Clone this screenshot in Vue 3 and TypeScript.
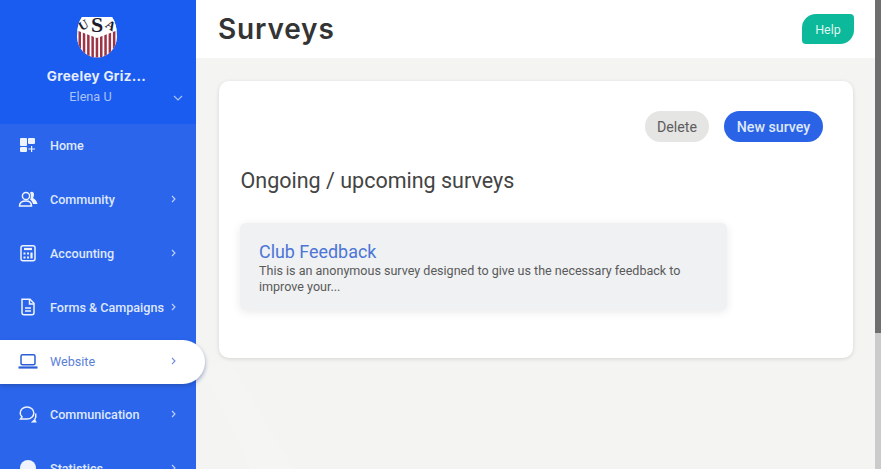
<script setup lang="ts">
interface NavItem { label: string; icon: string; arrow: boolean; active?: boolean }
const items: NavItem[] = [
  { label: 'Home', icon: 'home', arrow: false },
  { label: 'Community', icon: 'community', arrow: true },
  { label: 'Accounting', icon: 'accounting', arrow: true },
  { label: 'Forms & Campaigns', icon: 'forms', arrow: true },
  { label: 'Website', icon: 'website', arrow: true, active: true },
  { label: 'Communication', icon: 'communication', arrow: true },
  { label: 'Statistics', icon: 'statistics', arrow: true },
]
const stripes = [0, 1, 2, 3, 4, 5, 6, 7, 8]
</script>

<template>
  <div class="page">
    <aside class="sidebar">
      <div class="brand">
        <svg class="logo" width="42" height="44" viewBox="0 0 42 44">
          <defs>
            <clipPath id="logoClip"><path d="M6 3 H36 Q41 10 41 23 A20 20.500 0 0 1 1 23 Q1 10 6 3Z" /></clipPath>
          </defs>
          <g clip-path="url(#logoClip)">
            <rect width="42" height="44" fill="#fff" />
            <rect v-for="s in stripes" :key="s" :x="2.500 + s * 4.300" y="8" width="2.500" height="36" fill="#9c3346" />
            <path d="M0 0H42V16L21 24L0 16Z" fill="#fff" />
            <text x="21" y="18" text-anchor="middle" class="logo-s">S</text>
            <text x="9.500" y="15" text-anchor="middle" class="logo-a" transform="rotate(-30 9.500 15)">U</text>
            <text x="32.500" y="15" text-anchor="middle" class="logo-a" transform="rotate(30 32.500 15)">A</text>
          </g>
        </svg>
        <div class="club">Greeley Griz...</div>
        <div class="user">
          <span>Elena U</span>
          <svg class="chev" width="10" height="6" viewBox="0 0 10 6"><path d="M1 1l4 4 4-4" fill="none" stroke="currentColor" stroke-width="1.2" /></svg>
        </div>
      </div>
      <nav class="nav">
        <a v-for="item in items" :key="item.label" class="item" :class="{ active: item.active }">
          <span class="icon">
            <svg width="22" height="20" viewBox="0 0 22 20" fill="none" stroke="currentColor" stroke-width="1.5">
              <g v-if="item.icon === 'home'" fill="currentColor" stroke="none">
                <rect x="3" y="3" width="7" height="8" rx="1" />
                <rect x="11" y="3" width="7" height="6" rx="1" />
                <rect x="3" y="12" width="7" height="5" rx="1" />
                <path d="M14 11h1.200v2.400H18v1.200h-2.800V17H14v-2.400h-2.600v-1.200H14z" />
              </g>
              <g v-else-if="item.icon === 'community'">
                <circle cx="9" cy="7" r="3.600" />
                <path d="M2.500 17c0-3.500 2.500-5 6.500-5s5.500 2 5.500 5z" />
                <path d="M13 3.500c2-1.500 4-.5 4 2 0 1.500-.5 2.500-1 3.500 2 1 4 3 4.500 6h-4.500c-.5-2-1.500-3.500-3-4.500 1-1.500 1.500-4 0-7z" fill="currentColor" stroke="none" />
              </g>
              <g v-else-if="item.icon === 'accounting'">
                <rect x="4" y="2.750" width="14" height="15" rx="2" />
                <path d="M7 6h8" stroke-width="2.200" />
                <path d="M6.500 10.500h2M10 10.500h2M13.500 10.500h2M6.500 14.500h2M10 14.500h2M14.500 10v5.500" stroke-width="2.200" />
              </g>
              <g v-else-if="item.icon === 'forms'">
                <path d="M5 2.750h8l4 4v9.500a2 2 0 0 1-2 2H7a2 2 0 0 1-2-2z" transform="translate(0 -.5)" />
                <path d="M12.500 2.500v4.500h4.500" />
                <path d="M8 11h6M8 14h6" />
              </g>
              <g v-else-if="item.icon === 'website'">
                <rect x="4" y="3.750" width="14" height="10" rx="1.500" />
                <path d="M1.500 16.500h19" stroke-width="2.200" />
              </g>
              <g v-else-if="item.icon === 'communication'">
                <path d="M10 3c4 0 6.800 2.600 6.800 6s-2.800 6-6.800 6H3.500l1.500-2.200C3.800 11.800 3.200 10.500 3.200 9c0-3.400 2.800-6 6.800-6z" />
                <path d="M18.600 9.500c.6 2.500 0 4.500-.8 6" />
                <path d="M19.800 18.500h-6l4-3.800z" fill="currentColor" stroke="none" />
              </g>
              <g v-else>
                <circle cx="11" cy="10" r="8" fill="currentColor" stroke="none" />
              </g>
            </svg>
          </span>
          <span class="label">{{ item.label }}</span>
          <svg v-if="item.arrow" class="arrow" width="5" height="8" viewBox="0 0 5 8"><path d="M1 1l3 3-3 3" fill="none" stroke="currentColor" stroke-width="1.100" /></svg>
        </a>
      </nav>
    </aside>

    <main class="main">
      <header class="topbar">
        <h1>Surveys</h1>
        <button class="help">Help</button>
      </header>
      <div class="content">
        <svg class="band" width="110" height="111" viewBox="0 0 110 111"><polygon points="8,12 32,0 97,111 55,111" fill="#f5f5f4" /></svg>
        <section class="card">
          <div class="actions">
            <button class="btn gray">Delete</button>
            <button class="btn blue">New survey</button>
          </div>
          <h2>Ongoing / upcoming surveys</h2>
          <article class="survey">
            <h3>Club Feedback</h3>
            <p>This is an anonymous survey designed to give us the necessary feedback to improve your...</p>
          </article>
        </section>
      </div>
    </main>

    <div class="scrollbar"><div class="thumb"></div></div>
  </div>
</template>

<style scoped>
.page {
  display: flex;
  width: 881px;
  height: 469px;
  overflow: hidden;
  font-family: Roboto, "Liberation Sans", sans-serif;
  background: #f4f4f3;
}
.sidebar {
  position: relative;
  z-index: 2;
  flex: none;
  width: 196px;
  background: #2b65ec;
  color: #fff;
}
.brand {
  display: flex;
  flex-direction: column;
  align-items: center;
  height: 124px;
  padding-top: 14px;
  box-sizing: border-box;
  background: #1a5cf0;
}
.logo { display: block; margin: 0 2px 9px 0; }
.logo-s {
  font-family: "Liberation Serif", serif;
  font-weight: 700;
  font-size: 22px;
  fill: #1c1c2c;
}
.logo-a {
  font-family: "Liberation Serif", serif;
  font-weight: 700;
  font-size: 13px;
  fill: #1c1c2c;
}
.club {
  margin-right: 3px;
  font-family: Inter, "Open Sans", sans-serif;
  font-weight: 700;
  font-size: 13.500px;
  letter-spacing: 0.3px;
  line-height: 18px;
  color: #e6edfd;
}
.user {
  position: relative;
  width: 100%;
  margin-top: 4px;
  padding-right: 15px;
  box-sizing: border-box;
  text-align: center;
  font-size: 12.700px;
  line-height: 16px;
  color: #a9c2f7;
}
.chev {
  position: absolute;
  right: 13px;
  top: 6px;
}
.nav {
  display: flex;
  flex-direction: column;
  gap: 10px;
  margin-top: -1px;
}
.item {
  display: flex;
  align-items: center;
  flex: none;
  height: 44px;
  padding-left: 17px;
  box-sizing: border-box;
  font-size: 12.600px;
  font-weight: 500;
  color: #dfe8fc;
}
.item.active {
  margin: 1px -9px -2px 0;
  padding-bottom: 2px;
  border-radius: 0 24px 24px 0;
  background: #fff;
  color: #5a7fd8;
  font-weight: 400;
  box-shadow: 0 2px 4px rgba(30, 60, 130, 0.45);
}
.item.active .icon { color: #2b5fd8; }
.icon {
  display: flex;
  flex: none;
  width: 33px;
  color: #eef3fe;
}
.label {
  flex: none;
  width: 121px;
  white-space: nowrap;
}
.arrow { color: #c3d4f9; }
.item.active .arrow { color: #6f8fdc; }

.main {
  flex: 1;
  display: flex;
  flex-direction: column;
  min-width: 0;
}
.topbar {
  display: flex;
  align-items: center;
  justify-content: space-between;
  flex: none;
  height: 58px;
  padding: 0 21px 0 22px;
  box-sizing: border-box;
  background: #fff;
}
h1 {
  margin: 0;
  font-family: Inter, "Open Sans", sans-serif;
  font-weight: 600;
  font-size: 28px;
  letter-spacing: 0.85px;
  color: #343434;
}
.help {
  width: 52px;
  height: 30px;
  border: 0;
  padding: 0;
  border-radius: 14px 4px 14px 4px;
  background: #0cb99a;
  color: #dff5f1;
  font: 400 12.500px Roboto, sans-serif;
}
.content {
  position: relative;
  flex: 1;
  padding: 23px 22px 0 23px;
}
.band {
  position: absolute;
  left: 0;
  bottom: 0;
}
.card {
  position: relative;
  height: 277px;
  padding: 30px 30px 0 21px;
  box-sizing: border-box;
  border-radius: 10px;
  background: #fff;
  box-shadow: 0 1px 4px rgba(0, 0, 0, 0.13);
}
.actions {
  display: flex;
  justify-content: flex-end;
  gap: 15px;
}
.btn {
  height: 31px;
  border: 0;
  padding: 0;
  border-radius: 16px;
  font: 500 14.200px Roboto, sans-serif;
}
.gray { width: 64px; background: #e5e5e4; color: #5d5d5d; font-weight: 400; }
.blue { width: 99px; background: #2a63e6; color: #dfe8fb; }
h2 {
  margin: 25px 0 0 0.5px;
  font-weight: 400;
  font-size: 21.500px;
  line-height: 28px;
  color: #444;
}
.survey {
  width: 487px;
  height: 87px;
  margin-top: 28px;
  padding: 18px 30px 0 19px;
  box-sizing: border-box;
  border-radius: 6px;
  background: #eff1f2;
  box-shadow: 0 2px 10px rgba(0, 0, 0, 0.09);
}
h3 {
  margin: 0;
  font-weight: 400;
  font-size: 17.900px;
  line-height: 22px;
  color: #4b75d6;
}
p {
  margin: 0;
  font-size: 12.550px;
  line-height: 15.500px;
  color: #5a5a5a;
}
.scrollbar {
  flex: none;
  width: 6px;
  background: #cbcbcb;
}
.thumb {
  height: 333px;
  background: #6e6e6e;
}
</style>
